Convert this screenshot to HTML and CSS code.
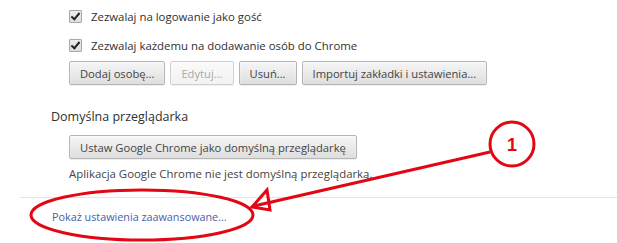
FILE: index.html
```html
<!DOCTYPE html>
<html lang="pl">
<head>
    <meta charset="UTF-8">
    <title>Ustawienia</title>
    <link rel="stylesheet" href="styles.css">
</head>
<body>
    <div class="page">
        <div class="section">
            <div class="options">
                <label class="check-row">
                    <span class="checkbox"></span>
                    <span>Zezwalaj na logowanie jako gość</span>
                </label>
                <label class="check-row">
                    <span class="checkbox"></span>
                    <span>Zezwalaj każdemu na dodawanie osób do Chrome</span>
                </label>
                <div class="btn-row">
                    <button class="btn">Dodaj osobę...</button>
                    <button class="btn" disabled>Edytuj...</button>
                    <button class="btn">Usuń...</button>
                    <button class="btn">Importuj zakładki i ustawienia...</button>
                </div>
            </div>
        </div>

        <div class="section">
            <h3>Domyślna przeglądarka</h3>
            <div class="options">
                <div class="btn-row">
                    <button class="btn">Ustaw Google Chrome jako domyślną przeglądarkę</button>
                </div>
                <p class="note">Aplikacja Google Chrome nie jest domyślną przeglądarką.</p>
            </div>
        </div>

        <div class="footer">
            <a href="#" class="link">Pokaż ustawienia zaawansowane...</a>
        </div>

        <svg class="annotation" width="617" height="243" viewBox="0 0 617 243">
            <ellipse cx="142" cy="215" rx="111" ry="25" />
            <line x1="490" y1="152" x2="254" y2="206" />
            <polygon points="252,207 267,190 270,210" />
            <circle cx="512" cy="144" r="22" />
            <text x="512" y="151">1</text>
        </svg>
    </div>
</body>
</html>
```

FILE: styles.css
```css
body {
    margin: 0;
    background: #fff;
    font-family: "Open Sans", sans-serif;
    font-size: 11.4px;
    color: #303030;
}
.page {
    position: relative;
    width: 617px;
    height: 243px;
    overflow: hidden;
}
.section {
    padding-left: 51px;
}
.options {
    padding-left: 18px;
}
.check-row {
    display: flex;
    align-items: center;
    gap: 9px;
    height: 13px;
    margin-top: 10px;
    margin-bottom: 16px;
}
.check-row + .check-row {
    margin-bottom: 9px;
}
.checkbox {
    position: relative;
    width: 11px;
    height: 11px;
    border: 1px solid #a8a8a8;
    border-radius: 1px;
    background: linear-gradient(#ededed, #dedede);
}
.checkbox::after {
    content: "";
    position: absolute;
    left: 3px;
    top: 0;
    width: 3px;
    height: 7px;
    border: solid #222;
    border-width: 0 2px 2px 0;
    transform: rotate(40deg);
}
.btn-row {
    display: flex;
    gap: 5px;
}
.btn {
    height: 24px;
    padding: 0 10px;
    font-family: inherit;
    font-size: 11.2px;
    color: #444;
    background: linear-gradient(#f5f5f5, #ededed 38%, #dedede);
    border: 1px solid #b5b5b5;
    border-radius: 2px;
    box-shadow: 0 1px 0 rgba(0, 0, 0, 0.06), inset 0 1px 2px rgba(255, 255, 255, 0.75);
}
.btn:disabled {
    color: #aaa;
    background: linear-gradient(#fafafa, #f2f2f2);
    border-color: #d0d0d0;
}
h3 {
    margin: 23px 0 10px;
    font-size: 12.5px;
    font-weight: normal;
    color: #303030;
}
.note {
    margin: 7px 0 0;
    color: #444;
}
.footer {
    margin: 16px 0 0 20px;
    padding: 11px 0 0 32px;
    border-top: 1px solid #e4e4e4;
}
.link {
    font-size: 10.8px;
    color: #4a5cab;
    text-decoration: none;
}
.annotation {
    position: absolute;
    left: 0;
    top: 0;
    fill: none;
    stroke: #e30613;
    stroke-width: 3;
}
.annotation text {
    fill: #e30613;
    stroke: none;
    font-family: "Liberation Sans", sans-serif;
    font-weight: bold;
    font-size: 18px;
    text-anchor: middle;
}
```
